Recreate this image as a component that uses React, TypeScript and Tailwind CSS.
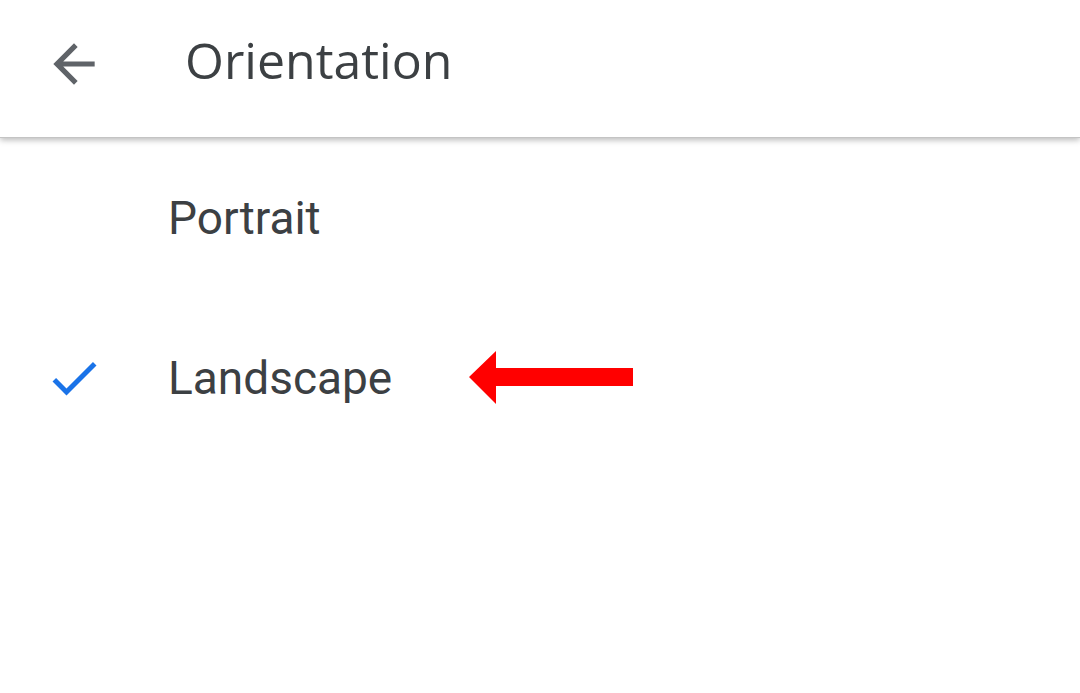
import React from 'react';

const options = [
  { id: 'portrait', label: 'Portrait', selected: false },
  { id: 'landscape', label: 'Landscape', selected: true },
];

const BackIcon = () => (
  <svg viewBox="0 0 24 24" className="w-[62px] h-[62px]" fill="#5f6368">
    <path d="M20 11H7.83l5.59-5.59L12 4l-8 8 8 8 1.41-1.41L7.83 13H20v-2z" />
  </svg>
);

const CheckIcon = () => (
  <svg viewBox="0 0 24 24" className="w-[60px] h-[60px]" fill="#1a73e8">
    <path d="M9 16.17L4.83 12l-1.42 1.41L9 19 21 7l-1.41-1.41z" />
  </svg>
);

const RedArrow = () => (
  <svg width="166" height="56" viewBox="0 0 166 56" className="block">
    <polygon points="0,26 27,0 27,17 164,17 164,35 27,35 27,53" fill="#ff0000" />
  </svg>
);

export default function App() {
  return (
    <div className="w-[1080px] h-[693px] bg-white overflow-hidden font-['Roboto',sans-serif] text-[#3c4043]">
      {/* Toolbar */}
      <header className="relative h-[138px] flex items-center shadow-[0_2px_6px_rgba(0,0,0,0.28)] border-b border-[#c4c4c4]">
        <div className="ml-[43px] mt-[-10px]">
          <BackIcon />
        </div>
        <h1 className="ml-[80px] mt-[-17px] text-[50px] font-['Open_Sans',sans-serif] leading-none">
          Orientation
        </h1>
      </header>

      {/* Options */}
      <ul>
        {options.map((opt) => (
          <li key={opt.id} className="h-[160px] flex items-center">
            <div className="w-[60px] ml-[44px] flex items-center">
              {opt.selected && <CheckIcon />}
            </div>
            <span className="ml-[64px] text-[46px] leading-none">{opt.label}</span>
            {opt.selected && (
              <div className="ml-[77px] mt-[2px]">
                <RedArrow />
              </div>
            )}
          </li>
        ))}
      </ul>
    </div>
  );
}
